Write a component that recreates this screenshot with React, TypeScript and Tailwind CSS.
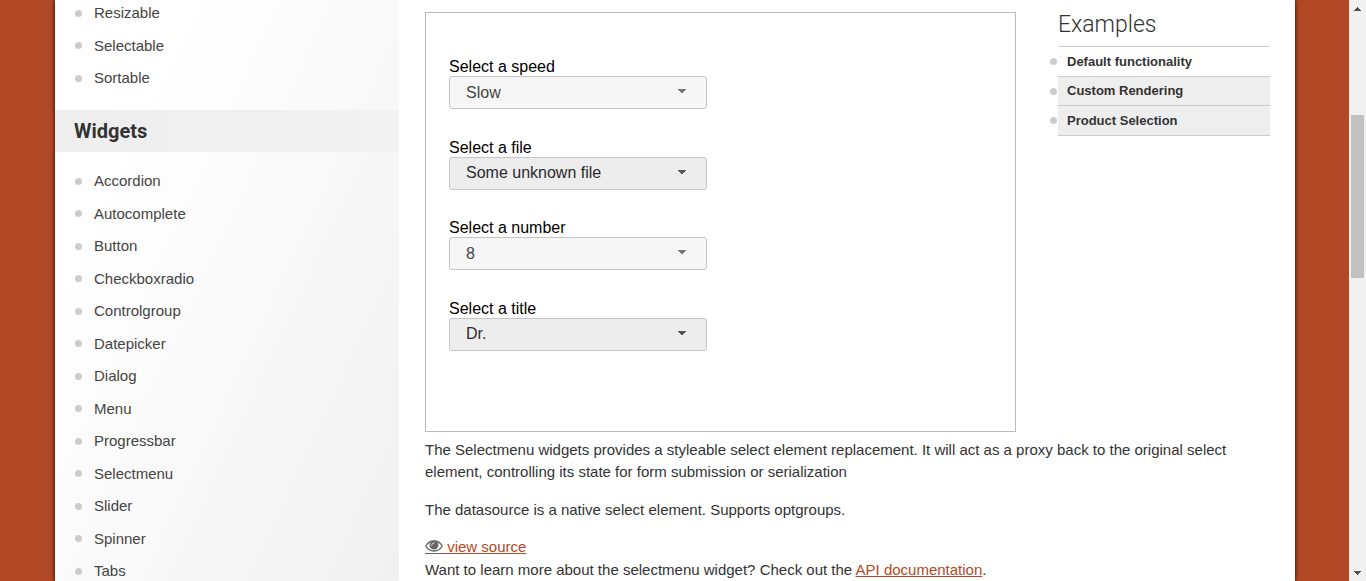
const interactions = ["Resizable", "Selectable", "Sortable"];
const widgets = [
  "Accordion",
  "Autocomplete",
  "Button",
  "Checkboxradio",
  "Controlgroup",
  "Datepicker",
  "Dialog",
  "Menu",
  "Progressbar",
  "Selectmenu",
  "Slider",
  "Spinner",
  "Tabs",
];
const fields = [
  { id: "speed", label: "Select a speed", value: "Slow", look: "bg-[#f6f6f6] text-[#454545]", caret: "text-[#777777]" },
  { id: "files", label: "Select a file", value: "Some unknown file", look: "bg-[#ededed] text-[#2b2b2b]", caret: "text-[#555555]" },
  { id: "number", label: "Select a number", value: "8", look: "bg-[#f6f6f6] text-[#454545]", caret: "text-[#777777]" },
  { id: "title", label: "Select a title", value: "Dr.", look: "bg-[#ededed] text-[#2b2b2b]", caret: "text-[#555555]" },
];
const examples = ["Default functionality", "Custom Rendering", "Product Selection"];

function Bullet() {
  return <span className="size-[7px] shrink-0 rounded-full bg-[#cccccc]" />;
}

function NavList({ items, className }: { items: string[]; className: string }) {
  return (
    <ul className={`flex shrink-0 flex-col justify-between pl-5 ${className}`}>
      {items.map((item) => (
        <li key={item} className="flex items-center gap-3 leading-[22px]">
          <Bullet />
          <a href="#" className="text-[#444444]">{item}</a>
        </li>
      ))}
    </ul>
  );
}

function SelectField({ id, label, value, look, caret }: (typeof fields)[number]) {
  return (
    <div className="flex flex-col items-start">
      <label htmlFor={id} className="text-base leading-[19px] text-black">{label}</label>
      <div className="grid w-[258px] max-w-full items-center">
        <select
          id={id}
          defaultValue={value}
          className={`col-start-1 row-start-1 h-[33px] appearance-none rounded-[3px] border border-[#c5c5c5] px-4 text-base ${look}`}
        >
          <option>{value}</option>
        </select>
        <svg
          viewBox="0 0 8 4"
          shapeRendering="crispEdges"
          className={`pointer-events-none col-start-1 row-start-1 mr-[21px] mb-[3px] h-1 w-2 justify-self-end ${caret}`}
          fill="currentColor"
        >
          <path d="M0 0h8v1H0zM1 1h6v1H1zM2 2h4v1H2zM3 3h2v1H3z" />
        </svg>
      </div>
    </div>
  );
}

function EyeIcon() {
  return (
    <svg viewBox="0 0 18 12" className="inline-block h-[14px] w-[18px] border-b border-[#666666] pb-px align-[-2px]">
      <path
        d="M0.8 6C2.6 2.8 5.6 1 9 1s6.4 1.8 8.2 5C15.4 9.2 12.4 11 9 11S2.6 9.2 0.8 6z"
        fill="none"
        stroke="#666666"
        strokeWidth="1.4"
      />
      <circle cx="9" cy="5.2" r="4.4" fill="#666666" />
      <path d="M6.6 5.2A2.4 2.4 0 0 1 9 2.8" fill="none" stroke="#ffffff" strokeWidth="0.8" strokeLinecap="round" />
    </svg>
  );
}

function Scrollbar() {
  return (
    <div className="flex w-[17px] shrink-0 flex-col items-center bg-[#f1f1f1]">
      <button aria-label="Scroll up" className="flex h-[17px] w-full items-center justify-center">
        <svg viewBox="0 0 7 4" className="h-1 w-[7px]" fill="#505050" shapeRendering="crispEdges">
          <path d="M3 0h1v1H3zM2 1h3v1H2zM1 2h5v1H1zM0 3h7v1H0z" />
        </svg>
      </button>
      <div className="flex w-full flex-1 flex-col items-center">
        <div className="grow-[98]" />
        <div className="w-[13px] grow-[163] bg-[#c1c1c1]" />
        <div className="grow-[286]" />
      </div>
      <button aria-label="Scroll down" className="flex h-[17px] w-full items-center justify-center">
        <svg viewBox="0 0 7 4" className="h-1 w-[7px]" fill="#505050" shapeRendering="crispEdges">
          <path d="M0 0h7v1H0zM1 1h5v1H1zM2 2h3v1H2zM3 3h1v1H3z" />
        </svg>
      </button>
    </div>
  );
}

export default function App() {
  return (
    <div className="flex h-screen overflow-hidden bg-[#b24926] font-['Liberation_Sans',Arial,sans-serif] text-[15px] text-[#333333]">
      <div className="flex min-w-0 flex-1 pr-[54px] pl-[55px]">
        <div className="flex min-w-0 flex-1 bg-white shadow-[0_0_4px_#000000]">
          <nav className="flex w-[344px] shrink-0 flex-col overflow-hidden bg-linear-115 from-white from-20% to-[#f1f1f1] pt-0.5">
            <NavList items={interactions} className="h-[87px]" />
            <h3 className="mt-[21px] mb-[18px] h-[42px] shrink-0 bg-linear-to-r from-[#eeeeee] to-[#f2f2f2] pl-[19px] font-[Roboto,sans-serif] text-[20px] leading-[42px] font-bold">
              Widgets
            </h3>
            <NavList items={widgets} className="h-[412px]" />
          </nav>

          <main className="min-w-0 flex-1 overflow-hidden pt-3 pr-[25px] pl-[26px]">
            <div className="flex gap-[42px]">
              <form className="flex h-[420px] min-w-0 flex-1 flex-col border border-[#bbbbbb] px-[23px] pt-11">
                <div className="flex h-[294px] flex-col justify-between">
                  {fields.map((field) => (
                    <SelectField key={field.id} {...field} />
                  ))}
                </div>
              </form>

              <aside className="w-[212px] shrink-0">
                <h2 className="h-[34px] font-[Roboto,sans-serif] text-[23px] leading-[26px] font-light">Examples</h2>
                <ul className="border-t border-[#cccccc] text-[13px] font-bold">
                  {examples.map((example, index) => (
                    <li
                      key={example}
                      className={`relative flex items-center border-b border-[#cccccc] pl-[9px] ${index > 0 ? "bg-[#eeeeee]" : ""} ${index === 1 ? "h-[29px]" : "h-[30px]"}`}
                    >
                      <span className="absolute top-[11px] -left-2 size-[7px] rounded-full bg-[#cccccc]" />
                      <a href="#">{example}</a>
                    </li>
                  ))}
                </ul>
              </aside>
            </div>

            <div className="pt-[7px] leading-[22px]">
              <p className="mb-4">
                The Selectmenu widgets provides a styleable select element replacement. It will act as a proxy back to the
                original select element, controlling its state for form submission or serialization
              </p>
              <p className="mb-[15px]">The datasource is a native select element. Supports optgroups.</p>
              <div className="mb-px">
                <a href="#" className="text-[#b24926] underline">
                  <EyeIcon /> view source
                </a>
              </div>
              <p>
                Want to learn more about the selectmenu widget? Check out the{" "}
                <a href="#" className="text-[#b24926] underline">API documentation</a>.
              </p>
            </div>
          </main>
        </div>
      </div>
      <Scrollbar />
    </div>
  );
}
